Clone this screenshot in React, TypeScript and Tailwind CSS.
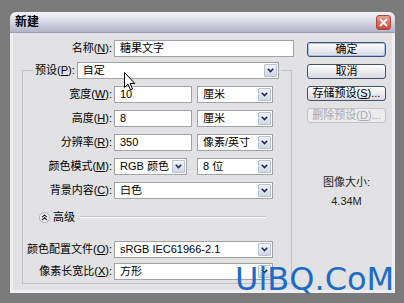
import React from "react";

const font = { fontFamily: '"Liberation Sans", "Noto Sans CJK SC", sans-serif' };

const Chevron: React.FC = () => (
  <svg width="7" height="5" viewBox="0 0 7 5">
    <path d="M0.8 0.8 L3.5 3.6 L6.2 0.8" fill="none" stroke="#1d2a55" strokeWidth="1.6" />
  </svg>
);

const Select: React.FC<{ value: string; className: string }> = ({ value, className }) => (
  <div className={`flex items-center h-[17px] bg-white border border-[#a3a3a3] ${className}`}>
    <span className="flex-1 pl-[5px] text-[11px] leading-none text-black whitespace-nowrap overflow-hidden">{value}</span>
    <div className="w-[13px] h-[13px] mr-[1px] flex items-center justify-center rounded-[1px] border border-[#b9c1d6] bg-gradient-to-b from-[#f4f6fb] to-[#cfd5e4]">
      <Chevron />
    </div>
  </div>
);

const Input: React.FC<{ value: string; className: string }> = ({ value, className }) => (
  <div className={`flex items-center h-[17px] bg-white border border-[#a3a3a3] pl-[5px] text-[11px] leading-none text-black ${className}`}>
    {value}
  </div>
);

const Label: React.FC<{ text: string; k: string; className?: string }> = ({ text, k, className = "" }) => (
  <span className={`text-[11px] leading-none text-black whitespace-nowrap ${className}`}>
    {text}(<span className="underline">{k}</span>):
  </span>
);

const Row: React.FC<{ text: string; k: string; children: React.ReactNode }> = ({ text, k, children }) => (
  <div className="flex items-center gap-[2px]">
    <div className="w-[89px] flex justify-end">
      <Label text={text} k={k} />
    </div>
    {children}
  </div>
);

const Btn: React.FC<{ children: React.ReactNode; primary?: boolean; disabled?: boolean }> = ({ children, primary, disabled }) => (
  <div
    className={`h-[15px] w-[79px] flex items-center justify-center rounded-[3px] text-[11px] leading-none whitespace-nowrap ${
      disabled
        ? "border border-[#c4c4c8] bg-[#ececef] text-[#a9a9ad]"
        : "border border-[#46506a] bg-gradient-to-b from-white to-[#d9dae3] text-black"
    } ${primary ? "shadow-[inset_0_0_0_1px_#a9c2ea]" : ""}`}
  >
    {children}
  </div>
);

export default function App() {
  return (
    <div className="relative w-[404px] h-[303px] overflow-hidden bg-[#7b7b7b] pt-[12px] pl-[10px]" style={font}>
      <div className="w-[385px] h-[281px] flex flex-col rounded-t-[6px] overflow-hidden">
        {/* title bar */}
        <div className="h-[21px] flex items-center justify-between pl-[5px] pr-[4px] bg-gradient-to-b from-[#f4f4f9] via-[#d6d6e4] to-[#b3b3c9] border-b border-[#9d9db3]">
          <span className="text-[12px] font-bold text-black leading-none">新建</span>
          <div className="w-[15px] h-[15px] mt-[1px] flex items-center justify-center rounded-[3px] border border-[#b0463d] bg-gradient-to-b from-[#ef9a8d] to-[#c9453a]">
            <svg width="9" height="9" viewBox="0 0 9 9">
              <path d="M1 1 L8 8 M8 1 L1 8" stroke="white" strokeWidth="1.8" />
            </svg>
          </div>
        </div>

        {/* body */}
        <div className="flex-1 flex border-[3px] border-t-0 border-[#eeeef3] bg-[#e2e2e4]">
          <div className="w-[281px] flex flex-col pt-[7px]">
            <div className="flex items-center gap-[2px]">
              <div className="w-[99px] flex justify-end">
                <Label text="名称" k="N" />
              </div>
              <Input value="糖果文字" className="w-[180px]" />
            </div>

            <fieldset className="mt-[5px] ml-[9px] w-[270px] border border-[#c2c2c6] pb-[3px]">
              <legend className="ml-[10px] px-[2px] flex items-center gap-[2px]">
                <Label text="预设" k="P" />
                <Select value="自定" className="w-[202px]" />
              </legend>
              <div className="flex flex-col gap-[7px] pt-[7px]">
                <Row text="宽度" k="W">
                  <Input value="10" className="w-[78px]" />
                  <Select value="厘米" className="w-[76px] ml-[3px]" />
                </Row>
                <Row text="高度" k="H">
                  <Input value="8" className="w-[78px]" />
                  <Select value="厘米" className="w-[76px] ml-[3px]" />
                </Row>
                <Row text="分辨率" k="R">
                  <Input value="350" className="w-[78px]" />
                  <Select value="像素/英寸" className="w-[76px] ml-[3px]" />
                </Row>
                <Row text="颜色模式" k="M">
                  <Select value="RGB 颜色" className="w-[73px]" />
                  <Select value="8 位" className="w-[76px] ml-[8px]" />
                </Row>
                <Row text="背景内容" k="C">
                  <Select value="白色" className="w-[159px]" />
                </Row>
              </div>

              <div className="flex items-center mt-[12px] h-[12px]">
                <div className="ml-[16px] w-[11px] h-[11px] rounded-full bg-[#f6f6f8] border border-[#a9a9b2] flex items-center justify-center">
                  <svg width="7" height="7" viewBox="0 0 7 7">
                    <path d="M1 3.2 L3.5 1 L6 3.2 M1 6 L3.5 3.8 L6 6" fill="none" stroke="#222" strokeWidth="1.1" />
                  </svg>
                </div>
                <span className="ml-[3px] text-[11px] leading-none text-black">高级</span>
                <div className="flex-1 ml-[5px] mr-[25px] h-[2px] border-t border-[#c2c2c6] border-b border-b-white" />
              </div>

              <div className="flex flex-col gap-[5px] mt-[18px]">
                <Row text="颜色配置文件" k="O">
                  <Select value="sRGB IEC61966-2.1" className="w-[159px]" />
                </Row>
                <Row text="像素长宽比" k="X">
                  <Select value="方形" className="w-[159px]" />
                </Row>
              </div>
            </fieldset>
          </div>

          <div className="ml-[13px] w-[79px] flex flex-col pt-[9px]">
            <div className="flex flex-col gap-[7px]">
              <Btn primary>确定</Btn>
              <Btn>取消</Btn>
              <Btn>
                存储预设(<span className="underline">S</span>)...
              </Btn>
              <Btn disabled>
                删除预设(<span className="underline">D</span>)...
              </Btn>
            </div>
            <div className="mt-[52px] flex flex-col items-center gap-[5px] text-[11px] leading-[14px] text-[#222]">
              <span>图像大小:</span>
              <span>4.34M</span>
            </div>
          </div>
        </div>
      </div>

      {/* mouse pointer */}
      <svg className="absolute left-[124px] top-[72px]" width="12" height="19" viewBox="0 0 12 19">
        <path d="M0.5 0.5 L0.5 15.5 L4 12.2 L6.6 18 L8.6 17.1 L6.1 11.5 L10.8 11.5 Z" fill="white" stroke="black" strokeWidth="1" />
      </svg>

      {/* watermark */}
      <div
        className="absolute left-[235px] top-[263px] text-[32px] leading-none text-[#1c6cc7] whitespace-nowrap"
        style={{ fontFamily: '"DejaVu Sans", sans-serif' }}
      >
        UiBQ.CoM
      </div>
    </div>
  );
}
